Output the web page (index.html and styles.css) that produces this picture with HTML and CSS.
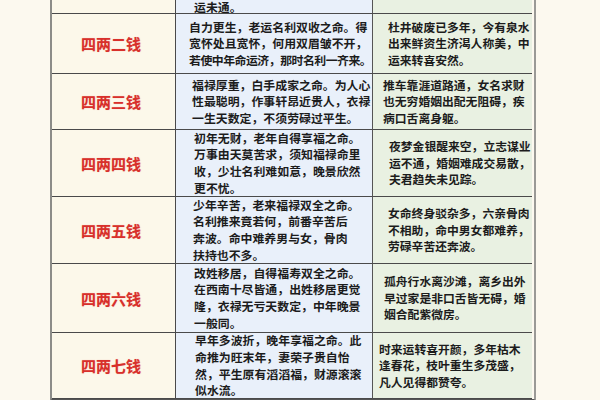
FILE: index.html
```html
<!DOCTYPE html>
<html lang="zh">
<head>
<meta charset="utf-8">
<link rel="stylesheet" href="styles.css">
</head>
<body>
<div class="page">
  <div class="table">
    <div class="cell label row0"></div>
    <div class="cell verse row0 p18"><span>运未通。</span></div>
    <div class="cell note row0"></div>

    <div class="cell label">四两二钱</div>
    <div class="cell verse p13"><span>自力更生，老运名利双收之命。得<br>宽怀处且宽怀，何用双眉皱不开，<br><span class="tight">若使中年命运济，那时名利一齐来。</span></span></div>
    <div class="cell note n15">杜井破废已多年，今有泉水<br>出来鲜资生济渴人称美，中<br>运来转喜安然。</div>

    <div class="cell label">四两三钱</div>
    <div class="cell verse p16">福禄厚重，白手成家之命。为人心<br>性最聪明，作事轩昂近贵人，衣禄<br>一生天数定，不须劳碌过平生。</div>
    <div class="cell note n10">推车靠涯道路通，女名求财<br>也无穷婚姻出配无阻碍，疾<br>病口舌离身躯。</div>

    <div class="cell label">四两四钱</div>
    <div class="cell verse p18">初年无财，老年自得享福之命。<br>万事由天莫苦求，须知福禄命里<br>收，少壮名利难如意，晚景欣然<br>更不忧。</div>
    <div class="cell note n16">夜梦金银醒来空，立志谋业<br>运不通，婚姻难成交易散，<br>夫君趋失未见踪。</div>

    <div class="cell label">四两五钱</div>
    <div class="cell verse p17">少年辛苦，老来福禄双全之命。<br>名利推来竟若何，前番辛苦后<br>奔波。命中难养男与女，骨肉<br>扶持也不多。</div>
    <div class="cell note n15">女命终身驳杂多，六亲骨肉<br>不相助，命中男女都难养，<br>劳碌辛苦还奔波。</div>

    <div class="cell label">四两六钱</div>
    <div class="cell verse p18">改姓移居，自得福寿双全之命。<br>在西南十尽皆通，出姓移居更觉<br>隆，衣禄无亏天数定，中年晚景<br>一般同。</div>
    <div class="cell note n11">孤舟行水离沙滩，离乡出外<br>早过家是非口舌皆无碍，婚<br>姻合配紫微房。</div>

    <div class="cell label">四两七钱</div>
    <div class="cell verse p19">早年多波折，晚年享福之命。此<br>命推为旺末年，妻荣子贵自怡<br>然，平生原有滔滔福，财源滚滚<br>似水流。</div>
    <div class="cell note n6">时来运转喜开颜，多年枯木<br>逢春花，枝叶重生多茂盛，<br>凡人见得都赞夸。</div>
  </div>
</div>
</body>
</html>
```

FILE: styles.css
```css
html, body {
  margin: 0;
  padding: 0;
  background: #fcf9ef;
}

.page {
  width: 600px;
  height: 400px;
  overflow: hidden;
  padding-left: 50px;
  box-sizing: border-box;
  font-family: "Noto Sans CJK SC", "Noto Sans", sans-serif;
}

.table {
  display: grid;
  grid-template-columns: 124px 197px 159px;
  grid-template-rows: 14px 60px 56px 67px 67px 69px 66px;
  width: 482px;
  border-left: 2px solid #8c8c88;
  border-right: 2px solid #9a9a96;
  border-bottom: 2px solid #555;
}

.cell {
  box-sizing: border-box;
  border-bottom: 1px solid #4a4a4a;
  display: flex;
  align-items: center;
  white-space: nowrap;
  overflow: hidden;
}

.label {
  background: #fcf8ea;
  border-right: 1px solid #4a4a4a;
  justify-content: center;
  padding-right: 5px;
  color: #d8302b;
  font-size: 15px;
  font-weight: 700;
  text-shadow: 0 0 1px rgba(216, 48, 43, 0.35);
}

.verse {
  background: #e9f0fa;
  border-right: 1px solid #555;
  color: #1c1c1c;
  font-size: 11.9px;
  font-weight: 700;
  line-height: 16.6px;
}

.note {
  background: #e9f1e2;
  color: #1c1c1c;
  font-size: 11.8px;
  font-weight: 700;
  line-height: 16.5px;
}

.tight {
  letter-spacing: -0.5px;
}

.row0 {
  align-items: flex-end;
  line-height: 12px;
}

.p13 { padding-left: 13px; }
.p16 { padding-left: 16px; }
.p17 { padding-left: 17px; }
.p18 { padding-left: 18px; }
.p19 { padding-left: 19px; }

.n6 { padding-left: 6px; }
.n10 { padding-left: 10px; }
.n11 { padding-left: 11px; }
.n15 { padding-left: 15px; }
.n16 { padding-left: 16px; }
```
